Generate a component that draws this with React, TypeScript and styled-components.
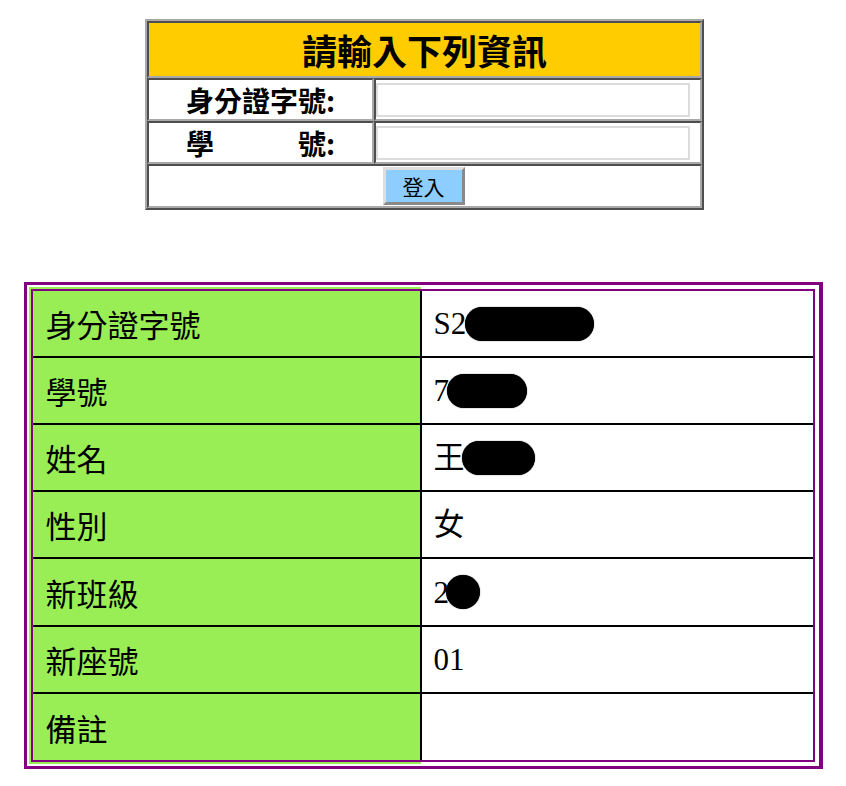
import React from "react";
import styled, { createGlobalStyle } from "styled-components";

const GlobalStyle = createGlobalStyle`
  html, body { margin: 0; padding: 0; background: #ffffff; }
  body { font-family: "Noto Sans CJK TC", "Noto Sans", sans-serif; color: #000; }
`;

const Page = styled.div`
  width: 846px;
  box-sizing: border-box;
  padding-top: 19px;
  display: flex;
  flex-direction: column;
  align-items: center;
`;

const LoginBox = styled.div`
  width: 559px;
  margin-left: 3px;
  box-sizing: border-box;
  border: 2px solid;
  border-color: #a9a9a9 #4e4e4e #4e4e4e #a9a9a9;
  display: grid;
  grid-template-columns: 227px 1fr;
`;

const LoginCell = styled.div<{ $span?: boolean; $h: number; $bg?: string }>`
  grid-column: ${(p) => (p.$span ? "1 / -1" : "auto")};
  height: ${(p) => p.$h}px;
  box-sizing: border-box;
  border: 2px solid;
  border-color: #4e4e4e #a9a9a9 #a9a9a9 #4e4e4e;
  background: ${(p) => p.$bg || "#ffffff"};
  display: flex;
  align-items: center;
  justify-content: center;
`;

const InputCell = styled(LoginCell)`
  justify-content: flex-start;
`;

const Title = styled.h1`
  margin: 0;
  font-size: 35px;
  font-weight: 700;
  line-height: 1;
  font-family: "Noto Sans CJK TC", sans-serif;
`;

const FieldLabel = styled.span`
  font-size: 28px;
  font-weight: 700;
  line-height: 1;
  white-space: pre;
  font-family: "Noto Sans CJK TC", sans-serif;
`;

const TextInput = styled.input`
  width: 314px;
  height: 34px;
  box-sizing: border-box;
  margin: 0;
  border: 2px solid #dcdcdc;
  background: #ffffff;
  outline: none;
`;

const LoginButton = styled.button`
  width: 82px;
  height: 38px;
  box-sizing: border-box;
  margin: 0 0 0 -2px;
  padding: 0;
  background: #8ecdff;
  border: 3px solid;
  border-color: #dedede #8a8a8a #8a8a8a #dedede;
  font-family: "Noto Sans CJK TC", sans-serif;
  font-size: 21px;
  color: #000;
  line-height: 1;
`;

const Frame = styled.div`
  margin-top: 72px;
  width: 799px;
  box-sizing: border-box;
  border: 3px solid #800080;
  border-right-width: 4px;
  padding: 2px;
`;

const Sheet = styled.div`
  padding: 2px;
  background: linear-gradient(to right, #99ee55 0, #99ee55 392px, #ffffff 392px);
`;

const InfoGrid = styled.div`
  border: 2px solid #800080;
  display: grid;
  grid-template-columns: 389px 1fr;
  background: #ffffff;
`;

const InfoCell = styled.div<{ $head?: boolean; $last?: boolean; $h: number }>`
  height: ${(p) => p.$h}px;
  box-sizing: border-box;
  border-bottom: ${(p) => (p.$last ? "none" : "2px solid #000")};
  border-right: ${(p) => (p.$head ? "2px solid #000" : "none")};
  background: ${(p) => (p.$head ? "#99ee55" : "#ffffff")};
  padding-left: ${(p) => (p.$head ? 13 : 12)}px;
  display: flex;
  align-items: center;
  font-size: 31px;
  line-height: 1;
  font-family: ${(p) =>
    p.$head
      ? `"Noto Sans CJK TC", sans-serif`
      : `"Liberation Serif", "Noto Sans CJK TC", serif`};
`;

const Redact = styled.span<{ $w: number; $shift: number }>`
  display: inline-block;
  width: ${(p) => p.$w}px;
  height: 34px;
  margin-left: ${(p) => p.$shift}px;
  border-radius: 17px;
  background: #000;
  box-shadow: 0 0 1px #000;
`;

type Row = { label: string; value: string; h: number; redact?: { w: number; shift: number } };

const rows: Row[] = [
  { label: "身分證字號", value: "S2", h: 67, redact: { w: 129, shift: -1 } },
  { label: "學號", value: "7", h: 67, redact: { w: 80, shift: -2 } },
  { label: "姓名", value: "王", h: 67, redact: { w: 73, shift: -3 } },
  { label: "性別", value: "女", h: 67 },
  { label: "新班級", value: "2", h: 68, redact: { w: 34, shift: -3 } },
  { label: "新座號", value: "01", h: 67 },
  { label: "備註", value: "", h: 66 },
];

export default function App() {
  return (
    <>
      <GlobalStyle />
      <Page>
        <LoginBox>
          <LoginCell $span $h={57} $bg="#ffcc00">
            <Title>請輸入下列資訊</Title>
          </LoginCell>
          <LoginCell $h={43}>
            <FieldLabel>身分證字號:</FieldLabel>
          </LoginCell>
          <InputCell $h={43}>
            <TextInput type="text" />
          </InputCell>
          <LoginCell $h={43}>
            <FieldLabel>{"學　　　號:"}</FieldLabel>
          </LoginCell>
          <InputCell $h={43}>
            <TextInput type="text" />
          </InputCell>
          <LoginCell $span $h={44}>
            <LoginButton type="button">登入</LoginButton>
          </LoginCell>
        </LoginBox>

        <Frame>
          <Sheet>
            <InfoGrid>
              {rows.map((r, i) => {
                const last = i === rows.length - 1;
                return (
                  <React.Fragment key={r.label}>
                    <InfoCell $head $last={last} $h={r.h}>
                      {r.label}
                    </InfoCell>
                    <InfoCell $last={last} $h={r.h}>
                      {r.value}
                      {r.redact && <Redact $w={r.redact.w} $shift={r.redact.shift} />}
                    </InfoCell>
                  </React.Fragment>
                );
              })}
            </InfoGrid>
          </Sheet>
        </Frame>
      </Page>
    </>
  );
}
